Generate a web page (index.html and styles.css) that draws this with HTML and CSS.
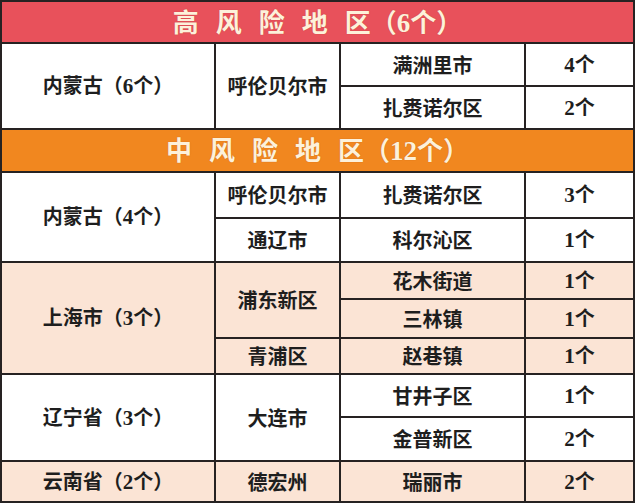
FILE: index.html
```html
<!DOCTYPE html>
<html lang="zh-CN">
<head>
<meta charset="utf-8">
<title>风险地区</title>
<link rel="stylesheet" href="styles.css">
</head>
<body>
<table class="risk">
  <colgroup>
    <col class="c1"><col class="c2"><col class="c3"><col class="c4">
  </colgroup>
  <tr class="head high r42">
    <td colspan="4"><span class="sp">高风险地</span>区（<span class="num">6</span>个）</td>
  </tr>
  <tr class="r43">
    <td rowspan="2">内蒙古（<span class="num">6</span>个）</td>
    <td rowspan="2">呼伦贝尔市</td>
    <td>满洲里市</td>
    <td><span class="num">4</span>个</td>
  </tr>
  <tr class="r43">
    <td>扎赉诺尔区</td>
    <td><span class="num">2</span>个</td>
  </tr>
  <tr class="head mid r43">
    <td colspan="4"><span class="sp">中风险地</span>区（<span class="num">12</span>个）</td>
  </tr>
  <tr class="r46">
    <td rowspan="2">内蒙古（<span class="num">4</span>个）</td>
    <td>呼伦贝尔市</td>
    <td>扎赉诺尔区</td>
    <td><span class="num">3</span>个</td>
  </tr>
  <tr class="r44">
    <td>通辽市</td>
    <td>科尔沁区</td>
    <td><span class="num">1</span>个</td>
  </tr>
  <tr class="peach r37">
    <td rowspan="3">上海市（<span class="num">3</span>个）</td>
    <td rowspan="2">浦东新区</td>
    <td>花木街道</td>
    <td><span class="num">1</span>个</td>
  </tr>
  <tr class="peach r39">
    <td>三林镇</td>
    <td><span class="num">1</span>个</td>
  </tr>
  <tr class="peach r36">
    <td>青浦区</td>
    <td>赵巷镇</td>
    <td><span class="num">1</span>个</td>
  </tr>
  <tr class="r43">
    <td rowspan="2">辽宁省（<span class="num">3</span>个）</td>
    <td rowspan="2">大连市</td>
    <td>甘井子区</td>
    <td><span class="num">1</span>个</td>
  </tr>
  <tr class="r44">
    <td>金普新区</td>
    <td><span class="num">2</span>个</td>
  </tr>
  <tr class="peach r41">
    <td>云南省（<span class="num">2</span>个）</td>
    <td>德宏州</td>
    <td>瑞丽市</td>
    <td><span class="num">2</span>个</td>
  </tr>
</table>
</body>
</html>
```

FILE: styles.css
```css
html, body {
  margin: 0;
  padding: 0;
  background: #ffffff;
}

.risk {
  border-collapse: collapse;
  table-layout: fixed;
  width: 633px;
  font-family: "Noto Sans CJK SC", "Noto Sans", sans-serif;
  font-weight: 700;
  font-size: 20px;
  color: #1e1e1e;
}

.c1 { width: 214px; }
.c2 { width: 125px; }
.c3 { width: 185px; }
.c4 { width: 109px; }

.risk td {
  border: 2px solid #262222;
  text-align: center;
  vertical-align: middle;
  padding: 0;
  line-height: 1;
}

.num {
  font-family: "Liberation Serif", "Times New Roman", serif;
  font-weight: 700;
  font-size: 21px;
}

.head td {
  font-size: 26px;
  color: #fdf1da;
  text-shadow: 0 0 1px rgba(120, 40, 20, 0.4);
}

.head .num {
  font-size: 27px;
}

.sp {
  letter-spacing: 17px;
}

.high td { background: #e8515b; }
.mid td { background: #f1871f; }
.peach td { background: #fbe4d5; }

.r36 { height: 36px; }
.r37 { height: 37px; }
.r39 { height: 39px; }
.r41 { height: 41px; }
.r42 { height: 42px; }
.r43 { height: 43px; }
.r44 { height: 44px; }
.r46 { height: 46px; }
```
